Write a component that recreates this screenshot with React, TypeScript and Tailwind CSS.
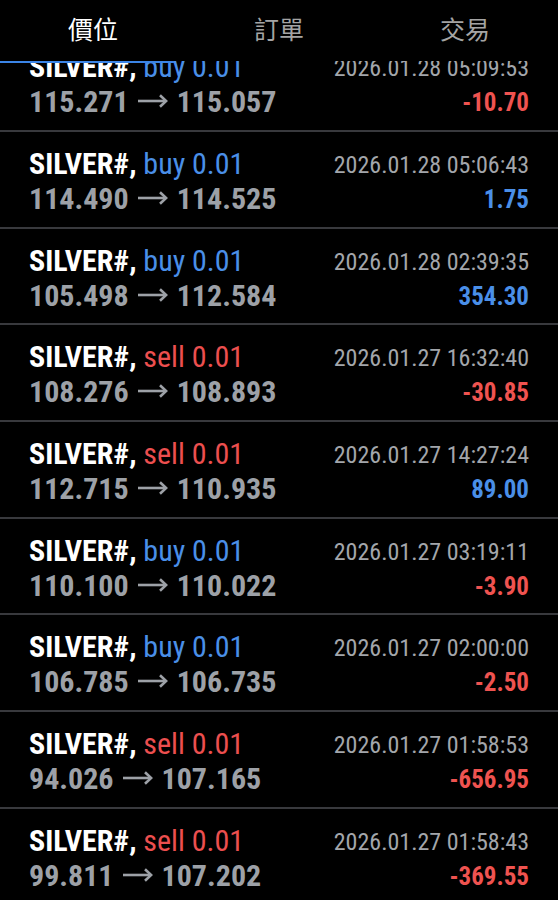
import React from "react";

type Trade = {
  side: "buy" | "sell";
  open: string;
  close: string;
  time: string;
  profit: string;
};

const trades: Trade[] = [
  { side: "buy", open: "115.271", close: "115.057", time: "2026.01.28 05:09:53", profit: "-10.70" },
  { side: "buy", open: "114.490", close: "114.525", time: "2026.01.28 05:06:43", profit: "1.75" },
  { side: "buy", open: "105.498", close: "112.584", time: "2026.01.28 02:39:35", profit: "354.30" },
  { side: "sell", open: "108.276", close: "108.893", time: "2026.01.27 16:32:40", profit: "-30.85" },
  { side: "sell", open: "112.715", close: "110.935", time: "2026.01.27 14:27:24", profit: "89.00" },
  { side: "buy", open: "110.100", close: "110.022", time: "2026.01.27 03:19:11", profit: "-3.90" },
  { side: "buy", open: "106.785", close: "106.735", time: "2026.01.27 02:00:00", profit: "-2.50" },
  { side: "sell", open: "94.026", close: "107.165", time: "2026.01.27 01:58:53", profit: "-656.95" },
  { side: "sell", open: "99.811", close: "107.202", time: "2026.01.27 01:58:43", profit: "-369.55" },
];

const font = "[font-family:'Roboto_Condensed','Liberation_Sans_Narrow','DejaVu_Sans_Condensed',Roboto,sans-serif]";

const Arrow: React.FC = () => (
  <svg width="30" height="14" viewBox="0 0 30 14" className="mx-[9px] shrink-0 mt-[-1px]" aria-label="→">
    <path d="M0 7H28" stroke="currentColor" strokeWidth="2.6" fill="none" />
    <path d="M22 1.2L28.2 7L22 12.8" stroke="currentColor" strokeWidth="2.6" fill="none" />
  </svg>
);

const TradeRow: React.FC<{ t: Trade }> = ({ t }) => {
  const negative = t.profit.startsWith("-");
  return (
    <div className="h-[96.7px] shrink-0 border-b-2 border-[#38393d] pt-[14px] px-[29px] flex justify-between">
      <div className="flex flex-col">
        <div className="text-[30px] leading-[35px] whitespace-nowrap">
          <span className="text-white font-bold">SILVER#,</span>{" "}
          <span className={t.side === "buy" ? "text-[#4a8fe8]" : "text-[#ec4f4f]"}>
            {t.side} 0.01
          </span>
        </div>
        <div className="flex items-center text-[30px] leading-[35px] font-bold text-[#9da1a7] whitespace-nowrap">
          <span>{t.open}</span>
          <Arrow />
          <span>{t.close}</span>
        </div>
      </div>
      <div className="flex flex-col items-end pt-[2px]">
        <div className="text-[24px] leading-[34px] text-[#a3a6ab] whitespace-nowrap">{t.time}</div>
        <div
          className={`text-[25px] leading-[36px] font-bold whitespace-nowrap ${
            negative ? "text-[#ef5350]" : "text-[#4a8fe8]"
          }`}
        >
          {t.profit}
        </div>
      </div>
    </div>
  );
};

const App: React.FC = () => {
  return (
    <div className={`w-[558px] h-[900px] bg-black overflow-hidden flex flex-col ${font} font-stretch-condensed`}>
      {/* Tabs */}
      <div className="relative z-10 h-[61px] shrink-0 bg-black grid grid-cols-3 items-center pb-[4px] [font-family:'Noto_Sans_CJK_TC',sans-serif] text-[25px]">
        <div className="text-center text-white">價位</div>
        <div className="text-center text-[#a4a4a4]">訂單</div>
        <div className="text-center text-[#a4a4a4]">交易</div>
        <div className="absolute left-0 bottom-[-2px] w-[174px] h-[2px] bg-[#3b84e6]" />
      </div>

      {/* History list */}
      <div className="flex-1 overflow-hidden">
        <div className="mt-[-25.7px] flex flex-col">
          {trades.map((t, i) => (
            <TradeRow key={i} t={t} />
          ))}
        </div>
      </div>
    </div>
  );
};

export default App;
